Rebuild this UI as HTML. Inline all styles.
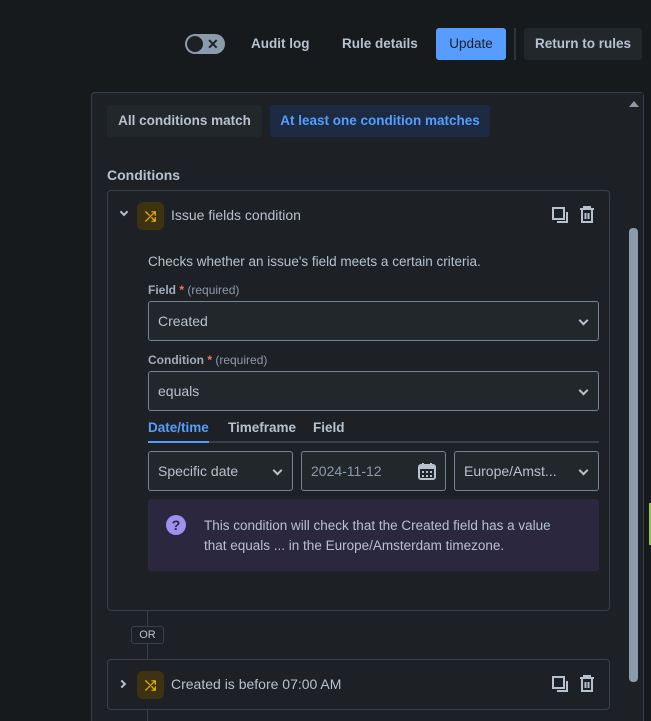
<!DOCTYPE html>
<html style="overflow:hidden;height:721px"><head><style>
*{box-sizing:border-box;margin:0;padding:0}
body{width:651px;height:721px;background:#161a1d;font-family:"Liberation Sans",sans-serif;color:#b6c2cf;position:relative;overflow:hidden;font-size:14px}
.a{position:absolute}
.btn{position:absolute;height:32px;line-height:32px;font-size:13.5px;font-weight:bold;color:#b6c2cf;border-radius:3px;padding:0 10px}
.inp{position:absolute;height:40px;border:1px solid #738496;border-radius:3px;background:#22272b;line-height:38px;padding-left:9px;color:#b6c2cf;font-size:14px}
.chev{position:absolute;right:11px;top:15px;width:7px;height:7px;border-right:2px solid #b6c2cf;border-bottom:2px solid #b6c2cf;transform:rotate(45deg)}
.lbl{position:absolute;font-size:12px;font-weight:bold;color:#9fadbc}
.lbl span{color:#f87168}.lbl i{font-style:normal;font-weight:normal;color:#8c9bab}
.ic{position:absolute;width:27px;height:28px;background:#3d3212;border-radius:6px;color:#e2b203;font-size:14px;text-align:center;line-height:28px;font-weight:bold}
</style></head><body>
<div class="a" style="left:185px;top:34px;width:40px;height:20px;border-radius:10px;background:#8c9bab"></div>
<div class="a" style="left:187px;top:36px;width:16px;height:16px;border-radius:8px;background:#1d2125"></div>
<div class="a" style="left:207px;top:34px;font-size:14px;font-weight:bold;color:#1d2125;line-height:20px">✕</div>
<div class="btn" style="left:241px;top:28px">Audit log</div>
<div class="btn" style="left:332px;top:28px">Rule details</div>
<div class="btn" style="left:436px;top:28px;width:70px;background:#579dff;color:#1d2125;font-weight:normal;text-align:center;padding:0">Update</div>
<div class="a" style="left:514px;top:28px;width:2px;height:32px;background:#2c333a"></div>
<div class="btn" style="left:524px;top:28px;background:#22272b;width:118px;text-align:center;padding:0">Return to rules</div>

<div class="a" style="left:91px;top:92px;width:553px;height:629px;background:#1d2125;border:1px solid #38414a;border-bottom:none;border-radius:4px 4px 0 0"></div>
<div class="a" style="left:624px;top:93px;width:19px;height:628px;background:#1d2125"></div>
<div class="a" style="left:629px;top:101px;width:0;height:0;border-left:5px solid transparent;border-right:5px solid transparent;border-bottom:6px solid #8c9bab"></div>
<div class="a" style="left:629px;top:228px;width:9px;height:454px;background:#8c9bab;border-radius:4px"></div>

<div class="btn" style="left:107px;top:105px;height:32px;width:155px;background:#22272b;padding:0;text-align:center">All conditions match</div>
<div class="btn" style="left:270px;top:105px;width:220px;background:#1c2b41;color:#579dff;padding:0;text-align:center">At least one condition matches</div>
<div class="a" style="left:107px;top:167px;font-weight:bold;font-size:14px">Conditions</div>

<div class="a" style="left:147px;top:610px;width:1px;height:111px;background:#38414a"></div>
<div class="a" style="left:107px;top:190px;width:503px;height:421px;border:1px solid #38414a;border-radius:4px;background:#1d2125"></div>
<div class="a" style="left:121px;top:209px;width:6px;height:6px;border-right:2px solid #b6c2cf;border-bottom:2px solid #b6c2cf;transform:rotate(45deg)"></div>
<div class="ic" style="left:137px;top:202px">⤮</div>
<div class="a" style="left:171px;top:207px">Issue fields condition</div>
<svg class="a" style="left:551px;top:206px" width="18" height="18" viewBox="0 0 18 18" fill="none" stroke="#b6c2cf" stroke-width="2"><rect x="2" y="2" width="11" height="11"/><path d="M16 6v10H6"/></svg>
<svg class="a" style="left:578px;top:205px" width="18" height="19" viewBox="0 0 18 19" fill="none" stroke="#b6c2cf" stroke-width="2"><path d="M2 4h14M6 4V2h6v2M4 4v13h10V4M7.5 8v6M10.5 8v6"/></svg>

<div class="a" style="left:148px;top:254px;font-size:13.5px">Checks whether an issue's field meets a certain criteria.</div>
<div class="lbl" style="left:148px;top:283px">Field <span>*</span> <i>(required)</i></div>
<div class="inp" style="left:148px;top:301px;width:451px">Created<div class="chev"></div></div>
<div class="lbl" style="left:148px;top:353px">Condition <span>*</span> <i>(required)</i></div>
<div class="inp" style="left:148px;top:371px;width:451px">equals<div class="chev"></div></div>
<div class="a" style="left:148px;top:420px;font-weight:bold;color:#579dff;font-size:13.5px">Date/time</div>
<div class="a" style="left:228px;top:420px;font-weight:bold;font-size:13.5px">Timeframe</div>
<div class="a" style="left:313px;top:420px;font-weight:bold;font-size:13.5px">Field</div>
<div class="a" style="left:148px;top:441px;width:451px;height:2px;background:#38414a"></div>
<div class="a" style="left:148px;top:441px;width:61px;height:2px;background:#579dff"></div>
<div class="inp" style="left:148px;top:451px;width:145px">Specific date<div class="chev"></div></div>
<div class="inp" style="left:301px;top:451px;width:145px;color:#8c9bab">2024-11-12
<svg class="a" style="right:9px;top:10px" width="18" height="18" viewBox="0 0 18 18"><rect x="1" y="3" width="16" height="14" rx="2" fill="none" stroke="#b6c2cf" stroke-width="2"/><rect x="1" y="3" width="16" height="4" fill="#b6c2cf"/><path d="M5 1v3M13 1v3" stroke="#b6c2cf" stroke-width="2"/><g fill="#b6c2cf"><rect x="4" y="9" width="2" height="2"/><rect x="8" y="9" width="2" height="2"/><rect x="12" y="9" width="2" height="2"/><rect x="4" y="13" width="2" height="2"/><rect x="8" y="13" width="2" height="2"/><rect x="12" y="13" width="2" height="2"/></g></svg></div>
<div class="inp" style="left:454px;top:451px;width:145px">Europe/Amst...<div class="chev"></div></div>
<div class="a" style="left:148px;top:499px;width:451px;height:72px;background:#2b273f;border-radius:3px"></div>
<div class="a" style="left:166px;top:515px;width:20px;height:20px;border-radius:10px;background:#9f8fef;color:#2b273f;font-weight:bold;font-size:14px;text-align:center;line-height:20px">?</div>
<div class="a" style="left:204px;top:516px;font-size:13.5px;line-height:20px;width:372px">This condition will check that the Created field has a value that equals ... in the Europe/Amsterdam timezone.</div>

<div class="a" style="left:131px;top:626px;width:33px;height:18px;border:1px solid #38414a;border-radius:3px;background:#1d2125;font-size:11px;text-align:center;line-height:16px">OR</div>
<div class="a" style="left:107px;top:659px;width:503px;height:51px;border:1px solid #38414a;border-radius:4px;background:#1d2125"></div>
<div class="a" style="left:119px;top:681px;width:6px;height:6px;border-right:2px solid #b6c2cf;border-bottom:2px solid #b6c2cf;transform:rotate(-45deg)"></div>
<div class="ic" style="left:137px;top:671px">⤮</div>
<div class="a" style="left:171px;top:676px">Created is before 07:00 AM</div>
<svg class="a" style="left:551px;top:675px" width="18" height="18" viewBox="0 0 18 18" fill="none" stroke="#b6c2cf" stroke-width="2"><rect x="2" y="2" width="11" height="11"/><path d="M16 6v10H6"/></svg>
<svg class="a" style="left:578px;top:674px" width="18" height="19" viewBox="0 0 18 19" fill="none" stroke="#b6c2cf" stroke-width="2"><path d="M2 4h14M6 4V2h6v2M4 4v13h10V4M7.5 8v6M10.5 8v6"/></svg>
<div class="a" style="left:649px;top:503px;width:2px;height:42px;background:#94c748"></div>
</body></html>
